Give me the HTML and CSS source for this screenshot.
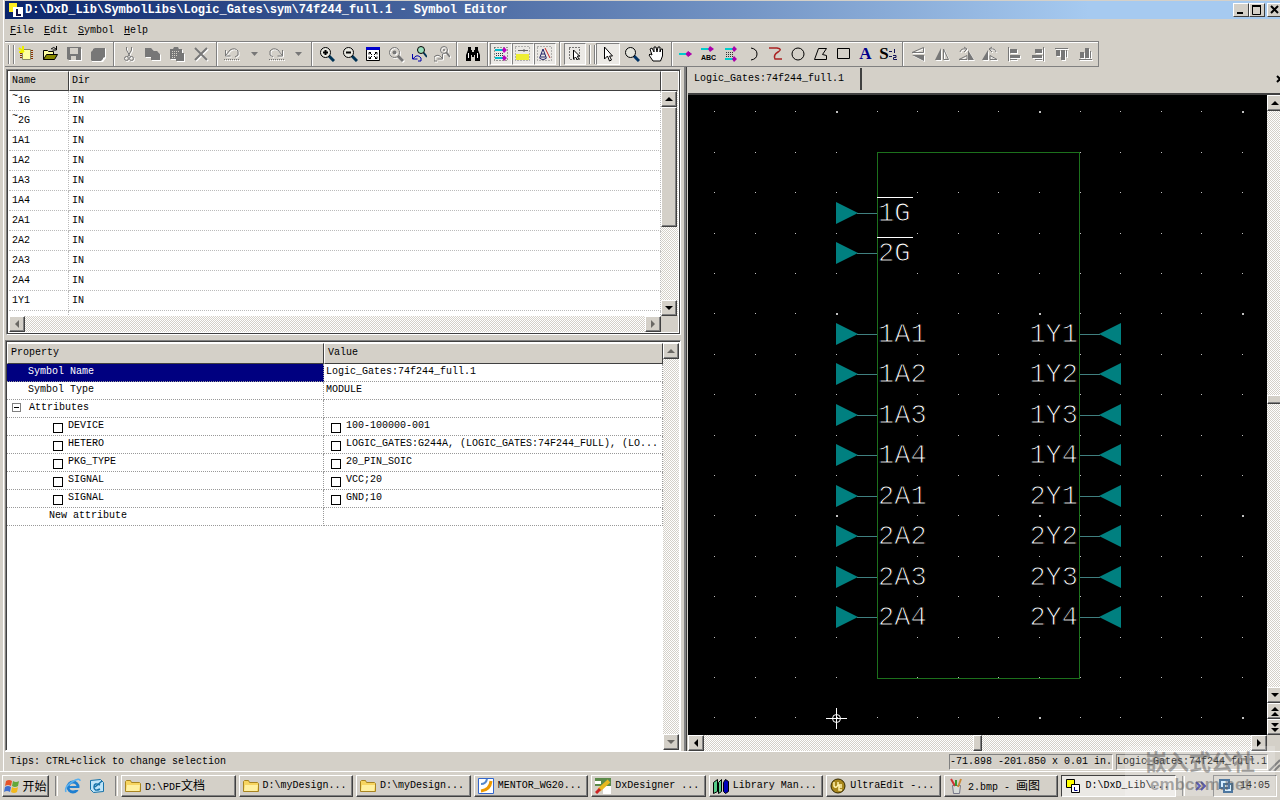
FILE: index.html
```html
<!DOCTYPE html>
<html lang="en">
<head>
    <meta charset="UTF-8">
    <title>D:\DxD_Lib\SymbolLibs\Logic_Gates\sym\74f244_full.1 - Symbol Editor</title>
    <link rel="stylesheet" href="styles.css">
</head>
<body>
    <div class="window">
        <header class="titlebar">
            <svg class="app-icon" width="16" height="16" viewBox="0 0 16 16"><path fill="#fe2" d="M1 1h8v9H1z"/><path fill="#fff" d="M5 5h10v10H5z"/><path fill="none" stroke="#114" stroke-width="2" d="M9 7v6h4"/></svg>
            <h1>D:\DxD_Lib\SymbolLibs\Logic_Gates\sym\74f244_full.1 - Symbol Editor</h1>
            <button class="win-btn" aria-label="Minimize"><svg width="12" height="10"><path d="M2 7h6v2H2z"/></svg></button>
            <button class="win-btn" aria-label="Maximize"><svg width="12" height="10"><path fill="none" stroke="#000" d="M1.500 1v8.500h8V1"/><path d="M1 0h9v2H1z"/></svg></button>
            <button class="win-btn close" aria-label="Close"><svg width="12" height="10"><path stroke="#000" stroke-width="2" d="M2 1l7 7M9 1L2 8"/></svg></button>
        </header>

        <nav class="menubar">
            <button><u>F</u>ile</button>
            <button><u>E</u>dit</button>
            <button><u>S</u>ymbol</button>
            <button><u>H</u>elp</button>
        </nav>

        <div class="toolbar">
            <span class="grip"></span>
            <button aria-label="New"><svg class="ic" viewBox="0 0 16 16"><path fill="#ffffa0" stroke="#886" d="M4.500 3.500h8v10h-8z"/><path stroke="#830" d="M2 5.500h2M2 7.500h2M2 9.500h2M2 11.500h2M13 4.500h2M13 6.500h2M13 8.500h2M13 10.500h2M13 12.500h2"/><path stroke="#ee0" stroke-width="2" d="M1 2l5 4M5 0v5M1 6h4"/></svg></button>
            <button aria-label="Open"><svg class="ic" viewBox="0 0 16 16"><path fill="#ffffa0" stroke="#000" d="M1.500 13.500v-9h4l1 1h5v3"/><path fill="#880" stroke="#000" d="M1.500 13.500l3-5h11l-3 5z"/><path fill="none" stroke="#000" d="M9 3q3-3 5 0M14.500 0v4h-4"/></svg></button>
            <button aria-label="Save"><svg class="ic" viewBox="0 0 16 16"><path fill="#fff" d="M3 15h13V3h-1v11H3z"/><path fill="#777" fill-rule="evenodd" d="M1 1h14v13H3l-2-1zM4 2v6h8V2zM5 10v4h5v-4z"/></svg></button>
            <button aria-label="Save all"><svg class="ic" viewBox="0 0 16 16"><path fill="#fff" d="M2 15v1h11l3-4V3l-1-1z"/><path fill="#777" d="M1 6l2-2V3l2-1h10v9l-2 1v1l-2 2H2l-1-1z"/></svg></button>
            <span class="sep"></span>
            <button aria-label="Cut"><svg class="ic g" viewBox="0 0 16 16"><g fill="none" stroke="#777"><path d="M5.500 1v3l4 7M10.500 1v3l-4 7"/><circle cx="5.500" cy="12.500" r="2"/><circle cx="10.500" cy="12.500" r="2"/></g></svg></button>
            <button aria-label="Copy"><svg class="ic g" viewBox="0 0 16 16"><path d="M0 2h6l3 3h3l3 3v6H6v-3H0z"/></svg></button>
            <button aria-label="Paste"><svg class="ic g" viewBox="0 0 16 16"><path d="M1 3h3l1-2h4l1 2h3v4h2v8H7v-2H1z"/><path stroke="#d4d0c8" stroke-dasharray="1 1" d="M3 5.500h8M3 7.500h6M3 9.500h5M3 11.500h4"/></svg></button>
            <button aria-label="Delete"><svg class="ic g" viewBox="0 0 16 16"><path stroke="#777" stroke-width="2" d="M2 2l12 12M14 2L2 14"/></svg></button>
            <span class="sep"></span>
            <button aria-label="Undo"><svg class="ic g" viewBox="0 0 16 16"><path fill="none" stroke="#777" d="M1.500 4v6h5M2 9l4-5q5-3 8 1v4l-3 2"/><path stroke="#777" stroke-dasharray="1 1" d="M0 13.500h15"/></svg></button>
            <button class="drop" aria-label="Undo list"><svg width="7" height="4"><path fill="#777" d="M0 0h7L3.500 4z"/></svg></button>
            <button aria-label="Redo"><svg class="ic g" viewBox="0 0 16 16"><path fill="none" stroke="#777" d="M14.500 4v6h-5M14 9l-4-5q-5-3-8 1v4l3 2"/><path stroke="#777" stroke-dasharray="1 1" d="M1 13.500h15"/></svg></button>
            <button class="drop" aria-label="Redo list"><svg width="7" height="4"><path fill="#777" d="M0 0h7L3.500 4z"/></svg></button>
            <span class="sep"></span>
            <div class="group zoom">
                <button aria-label="Zoom in"><svg class="ic" viewBox="0 0 16 16"><path stroke="#035" stroke-width="3" d="M10 10l5 5"/><circle cx="6.500" cy="6.500" r="5" fill="#e8e8e0" stroke="#000"/><path stroke="#000" stroke-width="2" d="M4 6.500h5M6.500 4v5"/></svg></button>
                <button aria-label="Zoom out"><svg class="ic" viewBox="0 0 16 16"><path stroke="#035" stroke-width="3" d="M10 10l5 5"/><circle cx="6.500" cy="6.500" r="5" fill="#e8e8e0" stroke="#000"/><path stroke="#000" stroke-width="2" d="M4 6.500h5"/></svg></button>
                <button aria-label="Fit"><svg class="ic" viewBox="0 0 16 16"><path fill="#fff" stroke="#000" d="M1.500 2.500h13v12h-13z"/><path fill="#00c" d="M1 1h14v3H1z"/><path fill="none" stroke="#000" d="M4 8.500V6.500h2M10 6.500h2v2M4 10.500v2h2M10 12.500h2v-2M4 6l3 3M12 6L9 9M4 13l3-3M12 13l-3-3"/></svg></button>
                <button aria-label="Zoom selected"><svg class="ic g" viewBox="0 0 16 16"><path stroke="#777" stroke-width="3" d="M10 10l5 5"/><circle cx="6.500" cy="6.500" r="5" fill="none" stroke="#777"/><circle cx="6.500" cy="6.500" r="2" fill="#777"/></svg></button>
                <button aria-label="Previous view"><svg class="ic" viewBox="0 0 16 16"><path stroke="#035" stroke-width="2" d="M12 6l4 5"/><circle cx="10" cy="4" r="3.500" fill="#9db" stroke="#000"/><path fill="none" stroke="#00a" d="M1.500 8v5h5M2 13q4-6 8-1v3H7"/></svg></button>
                <button aria-label="Next view"><svg class="ic g" viewBox="0 0 16 16"><path stroke="#777" stroke-width="2" d="M12 6l4 5"/><circle cx="10" cy="4" r="3.500" fill="none" stroke="#777"/><circle cx="10" cy="4" r="1" fill="#777"/><path fill="none" stroke="#777" d="M3 15H0v-4q4-4 8 1M8.500 8v5h-5"/></svg></button>
            </div>
            <span class="sep wide"></span>
            <button aria-label="Find"><svg class="ic" viewBox="0 0 16 16"><path d="M3 1h3v3h1v2h2V4h1V1h3v3l2 5v6h-5V9H9v2H7V9H6v6H1V9l2-5z"/><path stroke="#fff" d="M3.500 7v5M12.500 7v5"/></svg></button>
            <span class="sep narrow"></span>
            <div class="group small">
                <button class="on" aria-label="Pins"><svg class="ic" viewBox="0 0 16 16"><path fill="none" stroke="#444" stroke-dasharray="1 2" d="M1.500 1.500h13v13h-13z"/><path stroke="#0bc" stroke-width="2" d="M2 4h8M2 12h8"/><path stroke="#334" stroke-dasharray="1 1" d="M3 7.500h7M3 9.500h7"/><path fill="#b0b" d="M11 1l3 3-3 3-2-3zM11 9l3 3-3 3-2-3z"/></svg></button>
                <button class="on" aria-label="Box"><svg class="ic" viewBox="0 0 16 16"><path fill="none" stroke="#777" stroke-dasharray="1 2" d="M.500.500h14v14H.500z"/><path fill="#ee3" d="M1 8h13v6H1z"/><path stroke="#666" d="M3 4.500h10M9 3v3"/></svg></button>
                <button class="on" aria-label="Text"><svg class="ic" viewBox="0 0 16 16"><path fill="none" stroke="#777" stroke-dasharray="1 2" d="M.500.500h14v14H.500z"/><path fill="none" stroke="#226" d="M3 11l3-8 3 8zM4 8h4M2 11.500q4 4 8 0"/><path stroke="#c22" d="M8 2l5 10"/></svg></button>
            </div>
            <span class="sep wide"></span>
            <button class="on small-btn" aria-label="Area select"><svg class="ic" viewBox="0 0 16 16"><path fill="none" stroke="#000" stroke-dasharray="1 2" d="M2.500 1.500h10v12h-10z"/><path fill="#fff" stroke="#000" d="M6.500 4v9l2-2 2 3 1-1-1-3h2z"/></svg></button>
            <span class="grip second"></span>
            <button class="on" aria-label="Select"><svg class="ic" viewBox="0 0 16 16"><path fill="#fff" stroke="#000" d="M4.500 1v12l3-3 2 5 2-1-2-4h3z"/></svg></button>
            <button aria-label="Zoom"><svg class="ic" viewBox="0 0 16 16"><path stroke="#036" stroke-width="3" d="M10 10l5 5"/><circle cx="6.500" cy="6.500" r="5" fill="#e4e4dc" stroke="#000"/></svg></button>
            <button aria-label="Pan"><svg class="ic" viewBox="0 0 16 16"><path fill="#fff" stroke="#000" d="M5 15l-4-6 1-1 2 1-2-6 2-1 2 4V1h2l1 5 1-5h2v5l1-3h1.500v7l-2 5z"/></svg></button>
            <span class="sep"></span>
            <div class="group draw">
                <button aria-label="Add pin"><svg class="ic" viewBox="0 0 16 16"><path stroke="#0cc" stroke-width="2" d="M1 8h8"/><path fill="#a0a" stroke="#a0a" d="M10 5.500L13.500 8 10 10.500 8 8z"/></svg></button>
                <button aria-label="Add named pin"><svg class="ic" viewBox="0 0 16 16"><path stroke="#0cc" stroke-width="2" d="M1 3h8"/><path fill="#a0a" d="M10 0l4 3-4 3-2-3z"/><text x="1" y="14" class="tiny">ABC</text></svg></button>
                <button aria-label="Add pin array"><svg class="ic" viewBox="0 0 16 16"><path stroke="#0cc" stroke-width="2" d="M2 3h8M2 13h8"/><path stroke="#333" stroke-dasharray="1 1" d="M3 6.500h7M3 8.500h7M3 10.500h7"/><path fill="#a0a" d="M11 0l3 3-3 3-2-3zM11 10l3 3-3 3-2-3z"/></svg></button>
                <button aria-label="Arc"><svg class="ic" viewBox="0 0 16 16"><path fill="none" stroke="#000" d="M6 2q6 1 6 6t-6 6"/></svg></button>
                <button aria-label="Line"><svg class="ic" viewBox="0 0 16 16"><path fill="none" stroke="#a22" stroke-width="1.500" d="M1 2h8q6 1 1 4t-3 7h7"/></svg></button>
                <button aria-label="Circle"><svg class="ic" viewBox="0 0 16 16"><circle cx="8" cy="8" r="6" fill="none" stroke="#000"/></svg></button>
                <button aria-label="Polygon"><svg class="ic" viewBox="0 0 16 16"><path fill="none" stroke="#000" d="M1.500 13.500l4-11h8l-4 6 4 1v4z"/></svg></button>
                <button aria-label="Rectangle"><svg class="ic" viewBox="0 0 16 16"><path fill="none" stroke="#000" d="M2.500 2.500h12v10h-12z"/></svg></button>
                <button class="letter" aria-label="Add text">A</button>
                <button class="letter dark" aria-label="Sequence">S<svg width="8" height="14" viewBox="0 0 8 14"><path stroke="#115" d="M0 4.500h3M5.500 2v4M0 9.500h3M4 8.500h3v2H4.500v2H8" fill="none"/></svg></button>
            </div>
            <span class="sep"></span>
            <button aria-label="Flip"><svg class="ic g" viewBox="0 0 16 16"><path fill="none" stroke="#777" d="M2 6.500h11.500v-5z"/><path d="M2 9h12v6z"/></svg></button>
            <button aria-label="Mirror"><svg class="ic g" viewBox="0 0 16 16"><path d="M7 2v12H1z"/><path fill="none" stroke="#777" d="M9.500 3v10.500h5z"/></svg></button>
            <button aria-label="Rotate right"><svg class="ic g" viewBox="0 0 16 16"><path d="M10 4v10h6z"/><path fill="none" stroke="#777" d="M1 13.500h8v-4zM2 6q1-4 6-3M6 1l3 2-3 3"/></svg></button>
            <button aria-label="Rotate left"><svg class="ic g" viewBox="0 0 16 16"><path d="M6 4v10H0z"/><path fill="none" stroke="#777" d="M15 13.500H8v-4zM14 6q-1-4-6-3M10 1L7 3l3 3"/></svg></button>
            <button aria-label="Align left"><svg class="ic g" viewBox="0 0 16 16"><path d="M2 1h1v14H2zM4 3h7v4H4zM4 9h10v3H4z"/><path stroke="#777" d="M4 13.500h7"/></svg></button>
            <button aria-label="Align right"><svg class="ic g" viewBox="0 0 16 16"><path d="M13 1h1v14h-1zM5 3h7v4H5zM2 9h10v3H2z"/><path stroke="#777" d="M5 13.500h7"/></svg></button>
            <button aria-label="Align top"><svg class="ic g" viewBox="0 0 16 16"><path d="M1 2h13v1H1zM2 4h4v6H2zM7 4h4v10H7z"/><path stroke="#777" d="M12.500 4v7"/></svg></button>
            <button aria-label="Align bottom"><svg class="ic g" viewBox="0 0 16 16"><path d="M1 13h13v1H1zM2 6h4v6H2zM7 2h4v10H7z"/><path stroke="#777" d="M12.500 5v7"/></svg></button>
        </div>

        <main class="workspace">
            <section class="left">
                <div class="panel pins">
                    <div class="table-wrap">
                        <table class="pin-table">
                            <thead><tr><th class="col-name">Name</th><th>Dir</th></tr></thead>
                            <tbody>
                                <tr><td><sup>~</sup>1G</td><td>IN</td></tr>
                                <tr><td><sup>~</sup>2G</td><td>IN</td></tr>
                                <tr><td>1A1</td><td>IN</td></tr>
                                <tr><td>1A2</td><td>IN</td></tr>
                                <tr><td>1A3</td><td>IN</td></tr>
                                <tr><td>1A4</td><td>IN</td></tr>
                                <tr><td>2A1</td><td>IN</td></tr>
                                <tr><td>2A2</td><td>IN</td></tr>
                                <tr><td>2A3</td><td>IN</td></tr>
                                <tr><td>2A4</td><td>IN</td></tr>
                                <tr><td>1Y1</td><td>IN</td></tr>
                                <tr><td></td><td></td></tr>
                            </tbody>
                        </table>
                    </div>
                    <div class="side">
                        <div class="head-fill"></div>
                        <div class="vscroll">
                            <button class="sb" aria-label="Scroll up"><i class="up"></i></button>
                            <span class="thumb"></span>
                            <span class="rest"></span>
                            <button class="sb" aria-label="Scroll down"><i class="down"></i></button>
                        </div>
                    </div>
                    <div class="hscroll">
                        <button class="sb off" aria-label="Scroll left"><i class="lt"></i></button>
                        <span class="rest"></span>
                        <button class="sb off" aria-label="Scroll right"><i class="rt"></i></button>
                    </div>
                    <div class="corner"></div>
                </div>

                <div class="panel props">
                    <div class="table-wrap">
                        <table class="prop-table">
                            <thead><tr><th>Property</th><th class="col-value">Value</th></tr></thead>
                            <tbody>
                                <tr class="selected"><td class="lvl1">Symbol Name</td><td>Logic_Gates:74f244_full.1</td></tr>
                                <tr><td class="lvl1">Symbol Type</td><td>MODULE</td></tr>
                                <tr><td class="node"><button class="expander" aria-label="Collapse"></button>Attributes</td><td></td></tr>
                                <tr><td class="lvl2"><label><input type="checkbox">DEVICE</label></td><td class="val"><label><input type="checkbox">100-100000-001</label></td></tr>
                                <tr><td class="lvl2"><label><input type="checkbox">HETERO</label></td><td class="val"><label><input type="checkbox">LOGIC_GATES:G244A, (LOGIC_GATES:74F244_FULL), (LO...</label></td></tr>
                                <tr><td class="lvl2"><label><input type="checkbox">PKG_TYPE</label></td><td class="val"><label><input type="checkbox">20_PIN_SOIC</label></td></tr>
                                <tr><td class="lvl2"><label><input type="checkbox">SIGNAL</label></td><td class="val"><label><input type="checkbox">VCC;20</label></td></tr>
                                <tr><td class="lvl2"><label><input type="checkbox">SIGNAL</label></td><td class="val"><label><input type="checkbox">GND;10</label></td></tr>
                                <tr><td class="new">New attribute</td><td></td></tr>
                            </tbody>
                        </table>
                    </div>
                    <div class="vscroll">
                        <button class="sb off" aria-label="Scroll up"><i class="up"></i></button>
                        <span class="rest"></span>
                        <button class="sb off" aria-label="Scroll down"><i class="down"></i></button>
                    </div>
                </div>
            </section>

            <section class="editor">
                <div class="tabs">
                    <button class="tab">Logic_Gates:74f244_full.1</button>
                    <button class="tab-close" aria-label="Close tab"><svg width="8" height="8"><path stroke="#000" stroke-width="2" d="M1 1l6 6M7 1L1 7"/></svg></button>
                </div>
                <svg class="canvas">
                    <defs>
                        <pattern id="grid" x="148" y="16" width="203" height="202" patternUnits="userSpaceOnUse">
                            <path class="dot" d="M41 0h1v1h-1zM81 0h1v1h-1zM122 0h1v1h-1zM162 0h1v1h-1z"/>
                            <path class="dot" d="M0 41h1v1H0zM41 41h1v1h-1zM81 41h1v1h-1zM122 41h1v1h-1zM162 41h1v1h-1z"/>
                            <path class="dot" d="M0 81h1v1H0zM41 81h1v1h-1zM81 81h1v1h-1zM122 81h1v1h-1zM162 81h1v1h-1z"/>
                            <path class="dot" d="M0 122h1v1H0zM41 122h1v1h-1zM81 122h1v1h-1zM122 122h1v1h-1zM162 122h1v1h-1z"/>
                            <path class="dot" d="M0 162h1v1H0zM41 162h1v1h-1zM81 162h1v1h-1zM122 162h1v1h-1zM162 162h1v1h-1z"/>
                            <path class="dot" d="M0 0h2v2H0z"/>
                        </pattern>
                        <g id="pin-l"><path class="tri" d="M148-11v22l22-11z"/><path class="wire" d="M169 .500h20"/></g>
                        <g id="pin-r"><path class="tri" d="M433-11v22L411 0z"/><path class="wire" d="M392 .500h20"/></g>
                    </defs>
                    <rect width="100%" height="100%" fill="url(#grid)"/>
                    <rect class="outline" x="189.500" y="57.500" width="202" height="526"/>
                    <use href="#pin-l" y="118"/><use href="#pin-l" y="158"/>
                    <use href="#pin-l" y="239"/><use href="#pin-l" y="279"/>
                    <use href="#pin-l" y="320"/><use href="#pin-l" y="360"/>
                    <use href="#pin-l" y="401"/><use href="#pin-l" y="441"/>
                    <use href="#pin-l" y="482"/><use href="#pin-l" y="522"/>
                    <use href="#pin-r" y="239"/><use href="#pin-r" y="279"/>
                    <use href="#pin-r" y="320"/><use href="#pin-r" y="360"/>
                    <use href="#pin-r" y="401"/><use href="#pin-r" y="441"/>
                    <use href="#pin-r" y="482"/><use href="#pin-r" y="522"/>
                    <path class="bar" d="M189 102.500h36M189 142.500h36"/>
                    <g class="pin-name">
                        <text x="190" y="126">1G</text><text x="190" y="166">2G</text>
                        <text x="190" y="247">1A1</text><text x="190" y="287">1A2</text>
                        <text x="190" y="328">1A3</text><text x="190" y="368">1A4</text>
                        <text x="190" y="409">2A1</text><text x="190" y="449">2A2</text>
                        <text x="190" y="490">2A3</text><text x="190" y="530">2A4</text>
                    </g>
                    <g class="pin-name end">
                        <text x="390" y="247">1Y1</text><text x="390" y="287">1Y2</text>
                        <text x="390" y="328">1Y3</text><text x="390" y="368">1Y4</text>
                        <text x="390" y="409">2Y1</text><text x="390" y="449">2Y2</text>
                        <text x="390" y="490">2Y3</text><text x="390" y="530">2Y4</text>
                    </g>
                    <!-- origin marker -->
                    <path class="bar" d="M138 623.500h21M148.500 613v21"/><circle class="origin" cx="148.500" cy="623.500" r="4"/>
                </svg>
                <div class="vscroll">
                    <button class="sb" aria-label="Scroll up"><i class="up"></i></button>
                    <span class="rest"></span>
                    <span class="thumb"></span>
                    <span class="rest"></span>
                    <button class="sb" aria-label="Scroll down"><i class="down"></i></button>
                    <button class="sb" aria-label="Previous page"><i class="up"></i><i class="up"></i></button>
                    <button class="sb" aria-label="Next page"><i class="down"></i><i class="down"></i></button>
                </div>
                <div class="hscroll">
                    <button class="sb" aria-label="Scroll left"><i class="lt"></i></button>
                    <span class="rest"></span>
                    <span class="thumb"></span>
                    <span class="rest"></span>
                    <button class="sb" aria-label="Scroll right"><i class="rt"></i></button>
                </div>
            </section>
        </main>

        <footer class="statusbar">
            <span class="tips">Tips: CTRL+click to change selection</span>
            <span class="cell coords">-71.898 -201.850 x 0.01 in.</span>
            <span class="cell">Logic_Gates:74f244_full.1</span>
            <svg class="resize" width="12" height="12"><path stroke="#808080" stroke-width="2" d="M1 12L12 1M6 12l6-6"/></svg>
        </footer>
    </div>

    <nav class="taskbar">
        <button class="start"><svg width="16" height="16" viewBox="0 0 16 16"><path fill="#e5532a" d="M2 3q3-2 6 0L7 8Q4 6 1 8z"/><path fill="#63a83a" d="M9 3q3 2 6 0l-1 5q-3 2-6 0z"/><path fill="#3f6fd0" d="M1 9q3-2 6 0l-1 5q-3-2-6 0z"/><path fill="#f2b91c" d="M8 9q3 2 6 0l-1 5q-3 2-6 0z"/></svg><span class="cjk">开始</span></button>
        <span class="divider"></span>
        <a class="quick" href="#" aria-label="Internet Explorer"><svg width="18" height="18" viewBox="0 0 18 18"><circle cx="9" cy="10" r="5" fill="none" stroke="#1f7fd0" stroke-width="3"/><path stroke="#1f7fd0" stroke-width="2" d="M5 10h9"/><path fill="#d4d0c8" d="M10 11h6v2h-6z"/><path fill="none" stroke="#5ab0ee" stroke-width="1.500" d="M2 15Q0 10 8 5t8-1"/></svg></a>
        <a class="quick" href="#" aria-label="Show desktop"><svg width="18" height="18" viewBox="0 0 18 18"><path fill="#bfe4f8" stroke="#1772a8" d="M2.500 3.500l10-1 3 3v9l-10 1-3-3z"/><path fill="none" stroke="#1772a8" stroke-width="1.500" d="M12 8q-6-3-6 2t6 2M7 10l7-6"/></svg></a>
        <span class="divider"></span>
        <div class="tasks">
            <button><svg class="ic" viewBox="0 0 16 16"><path fill="#f7d560" stroke="#a88420" d="M.500 3.500l1-1h4l1 2h8l1 1v8h-15z"/><path fill="#fff0a0" d="M2 7h13l-1 6H1z"/></svg><span>D:\PDF<span class="cjk">文档</span></span></button>
            <button><svg class="ic" viewBox="0 0 16 16"><path fill="#f7d560" stroke="#a88420" d="M.500 3.500l1-1h4l1 2h8l1 1v8h-15z"/><path fill="#fff0a0" d="M2 7h13l-1 6H1z"/></svg>D:\myDesign...</button>
            <button><svg class="ic" viewBox="0 0 16 16"><path fill="#f7d560" stroke="#a88420" d="M.500 3.500l1-1h4l1 2h8l1 1v8h-15z"/><path fill="#fff0a0" d="M2 7h13l-1 6H1z"/></svg>D:\myDesign...</button>
            <button><svg class="ic" viewBox="0 0 16 16"><path fill="#fff" stroke="#36c" d="M.500.500h15v15H.500z"/><path fill="none" stroke="#58c" stroke-width="2" d="M3 6q5 0 6-5"/><path fill="none" stroke="#e90" stroke-width="3" d="M3 13q9-1 10-10"/></svg>MENTOR_WG20...</button>
            <button><svg class="ic" viewBox="0 0 16 16"><path fill="#5b8a4a" d="M0 0h16v8H0z"/><path fill="#fff" d="M0 3h6v3H0zM8 8h8v8H8z"/><path stroke="#e8b820" stroke-width="4" d="M4 12L14 3"/><path stroke="#c22" stroke-width="3" d="M1 15l4-4"/></svg>DxDesigner ...</button>
            <button><svg class="ic" viewBox="0 0 16 16"><path fill="#5c8" stroke="#000" d="M.500 4.500l4-3v12l-4 2zM5.500 4.500l3-3v12l-3 2z"/><path fill="#00b" stroke="#000" d="M10.500 4.500l2-3 3 2v10l-3 2-2-2z"/></svg>Library Man...</button>
            <button><svg class="ic" viewBox="0 0 16 16"><circle cx="8" cy="8" r="7" fill="#a8871c" stroke="#332800"/><path fill="none" stroke="#fff3b0" stroke-width="1.500" d="M4 4v4q2 3 4-1V4M12 7H9v5h3M9 9h3"/></svg>UltraEdit -...</button>
            <button><svg class="ic" viewBox="0 0 16 16"><path fill="#d8dcd8" stroke="#778" d="M4.500 7.500h8l-1 8h-6z"/><path stroke="#c33" stroke-width="2" d="M3 1l4 7"/><path stroke="#393" stroke-width="2" d="M8 2v6"/><path stroke="#c83" stroke-width="2" d="M13 1l-3 8"/></svg><span>2.bmp - <span class="cjk">画图</span></span></button>
            <button class="active"><svg class="ic" viewBox="0 0 16 16"><path fill="#ff0" stroke="#000" d="M1.500 1.500h8v8h-8z"/><path fill="#fff" stroke="#000" d="M6.500 6.500h8v8h-8z"/><path fill="none" stroke="#008" d="M9.500 9v3.500h3"/></svg>D:\DxD_Lib\...</button>
        </div>
        <span class="divider"></span>
        <svg class="chev" width="12" height="10"><path fill="none" stroke="#33a" stroke-width="2" d="M1 1l4 4-4 4M6 1l4 4-4 4"/></svg>
        <div class="tray">
            <svg class="ic" viewBox="0 0 16 16"><path fill="#cdeaff" stroke="#258" stroke-width="2" d="M2 2h9v8H2zM6 6h8v8H6z"/></svg>
            <time>14:05</time>
        </div>
    </nav>

    <div class="watermark"><b>嵌入式公社</b><span>embcom.net</span></div>
</body>
</html>
```
FILE: styles.css
```css
* {
    box-sizing: border-box;
}
body {
    margin: 0;
    height: 100vh;
    overflow: hidden;
    display: flex;
    flex-direction: column;
    background: #d4d0c8;
    color: #000;
    font-family: "Liberation Mono", "Noto Sans CJK SC", monospace;
    font-size: 10px;
    line-height: 14px;
}
button {
    font: inherit;
    color: inherit;
    background: none;
    border: none;
    padding: 0;
    display: flex;
    align-items: center;
    justify-content: center;
    white-space: nowrap;
}
svg {
    flex: none;
}
.ic {
    width: 16px;
    height: 16px;
}
.g {
    fill: #777;
    filter: drop-shadow(1px 1px 0 #fff);
}
.cjk {
    font-family: "Noto Sans CJK SC", sans-serif;
    font-size: 12px;
}
.window {
    flex: 1;
    min-height: 0;
    display: flex;
    flex-direction: column;
    margin-left: 3px;
    padding: 1px 0 0 1px;
    border-left: 1px solid #fff;
}

/* title and menu */
.titlebar {
    height: 18px;
    flex: none;
    display: flex;
    align-items: center;
    background: linear-gradient(to right, #0a246a, #a6caf0 85%);
    color: #fff;
}
.app-icon {
    margin: 0 1px 0 3px;
}
.titlebar h1 {
    flex: 1;
    margin: 0;
    font-size: 12px;
    font-weight: bold;
}
.win-btn {
    width: 16px;
    height: 14px;
    background: #d4d0c8;
    border: 1px solid;
    border-color: #fff #404040 #404040 #fff;
}
.win-btn.close {
    margin: 0 -3px 0 2px;
}
.menubar {
    height: 22px;
    flex: none;
    display: flex;
    align-items: center;
    gap: 10px;
    padding: 2px 0 0 5px;
}

/* toolbar */
.toolbar {
    align-self: flex-start;
    flex: none;
    height: 26px;
    display: flex;
    align-items: center;
    border: 1px solid #808080;
    border-left: none;
    box-shadow: inset 0 1px #fff;
}
.toolbar button {
    width: 24px;
    height: 22px;
}
.toolbar .drop {
    width: 20px;
}
.grip {
    width: 6px;
    height: 19px;
    margin: 0 0 0 3px;
    border: solid #808080;
    border-width: 0 1px;
    box-shadow: inset 1px 0 #fff, inset -2px 0 #d4d0c8, 1px 0 #fff;
}
.grip.second {
    margin: 0 1px 0 3px;
}
.sep {
    width: 2px;
    height: 24px;
    margin: 0 2px 0 3px;
    border-left: 1px solid #808080;
    border-right: 1px solid #fff;
}
.sep.wide {
    margin: 0 3px;
}
.sep.narrow {
    margin: 0 1px 0 2px;
}
.group {
    display: flex;
    justify-content: space-between;
}
.group.zoom button {
    width: 23px;
}
.group.small button,
.toolbar .small-btn {
    width: 22px;
}
.group.draw {
    width: 224px;
}
.group.draw button {
    width: 22px;
}
.toolbar .on {
    border: 1px solid;
    border-color: #808080 #fff #fff #808080;
    background: #ebe9e5;
}
.tiny {
    font: bold 7px "Liberation Sans", sans-serif;
}
.toolbar .letter {
    font: bold 17px "Liberation Serif", serif;
    color: #00008b;
}
.toolbar .dark {
    color: #000;
}

/* workspace */
.workspace {
    flex: 1;
    min-height: 0;
    display: grid;
    grid-template-columns: 676fr 599fr;
}
.left {
    display: grid;
    grid-template-rows: 267fr 413fr;
    gap: 5px;
    min-width: 0;
    min-height: 0;
    padding-top: 2px;
}
.panel {
    display: grid;
    min-width: 0;
    min-height: 0;
    border: 1px solid;
    border-color: #808080 #fff #fff #808080;
    box-shadow: inset 1px 1px #404040;
    background: #fff;
}
.pins {
    grid-template-columns: 1fr 17px;
    grid-template-rows: 1fr 16px;
    padding: 1px 2px 2px 2px;
    margin-left: 1px;
    box-shadow: inset 1px 1px #404040, inset -1px -1px #404040;
}
.props {
    grid-template-columns: 1fr 16px;
    padding: 2px 1px 0 1px;
}
.corner {
    background: #d4d0c8;
}
.table-wrap {
    overflow: hidden;
    min-height: 0;
}
table {
    width: 100%;
    table-layout: fixed;
    border-collapse: separate;
    border-spacing: 0;
}
th {
    height: 20px;
    padding: 0 3px;
    text-align: left;
    font-weight: normal;
    background: #d4d0c8;
    border: 1px solid;
    border-color: #fff #404040 #404040 #fff;
}
td {
    padding: 0 2px;
    white-space: nowrap;
    border-right: 1px dotted #999;
    border-bottom: 1px dotted #999;
}
.col-name {
    width: 60px;
}
.pin-table th {
    padding: 0 2px;
}
.pin-table td {
    height: 20px;
    padding: 0 3px;
    border-color: #bbb;
}
sup {
    line-height: 0;
    font-size: 10px;
}
.prop-table th {
    height: 21px;
}
.prop-table td {
    height: 18px;
}
.col-value {
    width: 339px;
}
.selected td:first-child {
    background: #000080;
    color: #fff;
}
.prop-table .lvl1 {
    padding-left: 21px;
}
.prop-table .lvl2 {
    padding-left: 46px;
}
.prop-table .new {
    padding-left: 42px;
}
.prop-table .val {
    padding-left: 7px;
}
label {
    display: flex;
    align-items: center;
    gap: 5px;
}
input[type="checkbox"] {
    appearance: none;
    width: 10px;
    height: 10px;
    margin: 4px 0 0;
    border: 1px solid #000;
    background: #fff;
}
.expander {
    display: inline-block;
    width: 9px;
    height: 9px;
    margin: 0 8px 0 3px;
    border: 1px solid #808080;
    background: linear-gradient(#000, #000) center / 5px 1px no-repeat;
    vertical-align: middle;
}

/* scroll bars */
.side {
    display: flex;
    flex-direction: column;
    min-height: 0;
}
.head-fill {
    height: 20px;
    background: #d4d0c8;
    border: 1px solid;
    border-color: #fff #d4d0c8 #404040 #fff;
}
.side .vscroll {
    flex: 1;
}
.vscroll,
.hscroll {
    display: flex;
    min-height: 0;
    background: repeating-conic-gradient(#fff 0 25%, #d4d0c8 0 50%) 0 0 / 2px 2px;
}
.vscroll {
    flex-direction: column;
}
.sb,
.thumb {
    flex: none;
    width: 16px;
    height: 16px;
    background: #d4d0c8;
    border: 1px solid;
    border-color: #fff #404040 #404040 #fff;
    box-shadow: inset -1px -1px #808080;
}
.sb {
    flex-direction: column;
    gap: 1px;
}
.rest {
    flex: 1;
}
.side .thumb {
    height: 120px;
}
.sb i {
    border: 4px solid transparent;
}
.sb .up {
    border-top: 0;
    border-bottom-color: #000;
}
.sb .down {
    border-bottom: 0;
    border-top-color: #000;
}
.sb .lt {
    border-left: 0;
    border-right-color: #000;
}
.sb .rt {
    border-right: 0;
    border-left-color: #000;
}
.off i {
    opacity: 0.5;
}

/* symbol editor */
.editor {
    display: grid;
    grid-template-columns: 1fr 13px;
    grid-template-rows: 27px 1fr 16px;
    min-width: 0;
    min-height: 0;
    margin-left: 3px;
    padding-top: 1px;
    border-left: 2px solid #808080;
    box-shadow: inset 1px 0 #404040;
    padding-left: 2px;
}
.tabs {
    grid-column: 1 / -1;
    display: flex;
    align-items: flex-start;
    justify-content: space-between;
    overflow: hidden;
    border-bottom: 2px solid #404040;
}
.tab {
    height: 22px;
    padding: 0 16px 0 6px;
    border-right: 2px solid #404040;
}
.tab-close {
    margin: 7px -4px 0 0;
}
.canvas {
    width: 100%;
    height: 100%;
    background: #000;
}
.editor .vscroll {
    overflow: hidden;
}
.editor .vscroll .thumb {
    height: 9px;
}
.editor .hscroll .thumb {
    width: 9px;
}
.dot {
    fill: #c0c0c0;
}
.outline {
    fill: none;
    stroke: #1c701c;
}
.tri {
    fill: #008080;
}
.wire {
    stroke: #408080;
}
.bar {
    stroke: #fff;
}
.origin {
    fill: none;
    stroke: #fff;
}
/* the dark edge keeps the strokes of the names thin */
.pin-name {
    fill: #fff;
    stroke: #000;
    stroke-width: 1px;
    font-size: 27px;
}
.pin-name.end {
    text-anchor: end;
}

/* status bar */
.statusbar {
    height: 20px;
    flex: none;
    display: flex;
    align-items: center;
    gap: 3px;
    padding-left: 5px;
    border-top: 1px solid #fff;
}
.tips {
    flex: 1;
}
.cell {
    border: 1px solid;
    border-color: #808080 #fff #fff #808080;
}
.resize {
    align-self: flex-end;
    margin-left: -3px;
}

/* task bar */
.taskbar {
    height: 29px;
    flex: none;
    display: flex;
    align-items: center;
    padding: 0 3px 0 2px;
    border-top: 1px solid #fff;
}
.start,
.tasks button {
    height: 22px;
    border: 1px solid;
    border-color: #fff #404040 #404040 #fff;
    box-shadow: inset -1px -1px #808080;
}
.start {
    width: 47px;
    gap: 2px;
}
.divider {
    width: 3px;
    height: 20px;
    margin: 0 3px 0 6px;
    border-left: 1px solid #808080;
    border-right: 1px solid #fff;
}
.quick {
    display: flex;
    padding: 0 3px;
}
.tasks {
    flex: 1;
    display: grid;
    grid-template-columns: repeat(9, 1fr);
    gap: 3px;
}
.tasks button {
    justify-content: flex-start;
    gap: 4px;
    padding-left: 3px;
    min-width: 0;
    overflow: hidden;
}
.tasks .active {
    border-color: #404040 #fff #fff #404040;
    box-shadow: none;
    background: #ebe9e5;
}
.chev {
    margin: 0 6px 0 7px;
}
.tray {
    width: 64px;
    height: 22px;
    display: flex;
    align-items: center;
    gap: 6px;
    padding-left: 4px;
    border: 1px solid;
    border-color: #808080 #fff #fff #808080;
}

/* site mark over the lower right corner */
.watermark {
    position: absolute;
    right: 5px;
    bottom: 4px;
    width: 150px;
    display: flex;
    flex-direction: column;
    align-items: center;
    background: rgba(255, 255, 255, 0.2);
    color: rgba(90, 90, 90, 0.5);
    pointer-events: none;
}
.watermark b {
    font: bold 22px/28px "Noto Sans CJK SC", sans-serif;
}
.watermark span {
    font: bold 17px/22px "Liberation Sans", sans-serif;
}
```
